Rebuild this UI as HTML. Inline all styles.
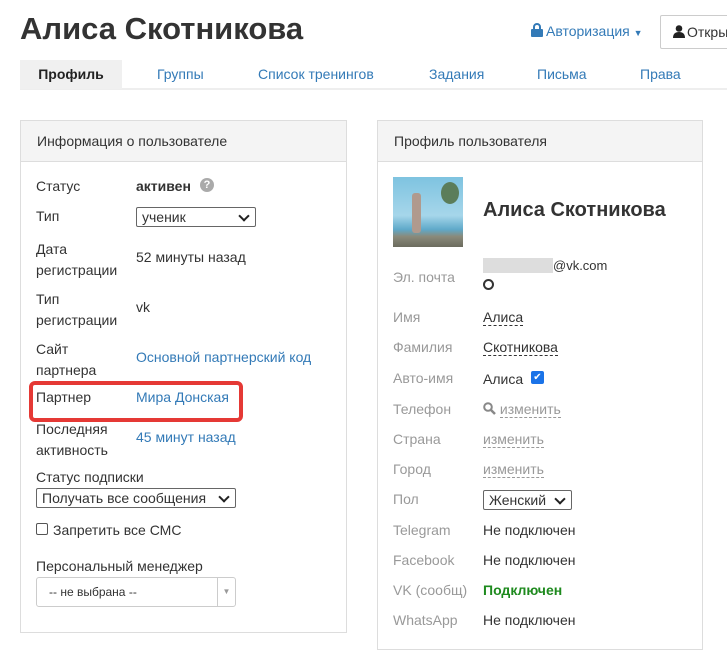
<!DOCTYPE html>
<html><head><meta charset="utf-8"><style>
*{box-sizing:border-box}
body{margin:0;width:727px;height:638px;overflow:hidden;background:#fff;font-family:"Liberation Sans",Arial,sans-serif;font-size:14px;color:#333;position:relative}
.a{position:absolute;white-space:nowrap}
h1{position:absolute;left:20px;top:11px;margin:0;font-size:31px;font-weight:bold;color:#333;letter-spacing:0px}
.tabs{position:absolute;left:20px;top:60px;width:707px;height:30px;border-bottom:2px solid #eee}
.tab{position:absolute;top:0;height:29px;line-height:29px;color:#337ab7;font-size:14px}
.panel{position:absolute;border:1px solid #ddd;background:#fff}
.ph{height:41px;background:#f4f4f4;border-bottom:1px solid #ddd;padding:12px 16px;font-size:14px;color:#333}
.l{color:#333}
.g{color:#999}
.lk{color:#337ab7}
.sel{position:absolute;border:1px solid #666;border-radius:2px;height:20px;font-size:14px;line-height:18px;padding-left:5px;background:#fff}
.sel:after{content:"";position:absolute;right:7px;top:4px;width:6px;height:6px;border-right:2px solid #222;border-bottom:2px solid #222;transform:rotate(45deg)}
.dash{border-bottom:1px dashed #333}
.dashg{border-bottom:1px dashed #999;color:#999}
</style></head><body>
<h1>Алиса Скотникова</h1>
<div class="a" style="left:531px;top:23px;color:#337ab7;font-size:14px"><svg width="12" height="14" viewBox="0 0 12 14" style="vertical-align:-1px;margin-right:3px"><path d="M3 6V4a3 3 0 0 1 6 0v2" fill="none" stroke="#337ab7" stroke-width="2"/><rect x="0" y="6" width="12" height="8" rx="1" fill="#337ab7"/></svg>Авторизация <span style="font-size:9px">▼</span></div>
<div class="a" style="left:660px;top:15px;width:80px;height:34px;border:1px solid #ccc;border-radius:2px;padding:8px 0 0 12px;font-size:14px"><svg width="12" height="13" viewBox="0 0 12 13" style="vertical-align:-1px;margin-right:2px"><circle cx="6" cy="3.5" r="3.3" fill="#222"/><path d="M0 13c0-4 2-6 6-6s6 2 6 6z" fill="#222"/></svg>Откры</div>
<div class="tabs">
<div class="tab" style="left:0;width:102px;background:#f0f0f0;color:#222;font-weight:bold;text-align:center">Профиль</div>
<div class="tab" style="left:137px">Группы</div>
<div class="tab" style="left:238px">Список тренингов</div>
<div class="tab" style="left:409px">Задания</div>
<div class="tab" style="left:517px">Письма</div>
<div class="tab" style="left:620px">Права</div>
</div>

<div class="panel" style="left:20px;top:120px;width:327px;height:513px">
<div class="ph">Информация о пользователе</div>
</div>
<div class="a l" style="left:36px;top:178px">Статус</div>
<div class="a" style="left:136px;top:178px;font-weight:bold">активен</div>
<div class="a" style="left:200px;top:178px;width:14px;height:14px;border-radius:50%;background:#aaa;color:#fff;font-size:11px;font-weight:bold;text-align:center;line-height:14px">?</div>
<div class="a l" style="left:36px;top:208px">Тип</div>
<div class="sel" style="left:136px;top:207px;width:120px">ученик</div>
<div class="a l" style="left:36px;top:239px;line-height:21px">Дата<br>регистрации</div>
<div class="a l" style="left:136px;top:249px">52 минуты назад</div>
<div class="a l" style="left:36px;top:289px;line-height:21px">Тип<br>регистрации</div>
<div class="a l" style="left:136px;top:299px">vk</div>
<div class="a l" style="left:36px;top:339px;line-height:21px">Сайт<br>партнера</div>
<div class="a lk" style="left:136px;top:349px">Основной партнерский код</div>
<div class="a" style="left:29px;top:381px;width:214px;height:41px;border:4px solid #e53935;border-radius:6px"></div>
<div class="a l" style="left:36px;top:389px">Партнер</div>
<div class="a lk" style="left:136px;top:389px">Мира Донская</div>
<div class="a l" style="left:36px;top:419px;line-height:21px">Последняя<br>активность</div>
<div class="a lk" style="left:136px;top:429px">45 минут назад</div>
<div class="a l" style="left:36px;top:469px">Статус подписки</div>
<div class="sel" style="left:36px;top:488px;width:200px">Получать все сообщения</div>
<div class="a" style="left:36px;top:523px;width:12px;height:12px;border:1px solid #555;border-radius:2px"></div>
<div class="a l" style="left:53px;top:522px">Запретить все СМС</div>
<div class="a l" style="left:36px;top:558px">Персональный менеджер</div>
<div class="a" style="left:36px;top:577px;width:200px;height:30px;border:1px solid #ccc;border-radius:3px;font-size:12px;padding:7px 0 0 12px">-- не выбрана --<div style="position:absolute;right:0;top:0;width:18px;height:28px;border-left:1px solid #ccc;color:#999;font-size:8px;text-align:center;line-height:28px">▼</div></div>

<div class="panel" style="left:377px;top:120px;width:326px;height:530px">
<div class="ph">Профиль пользователя</div>
</div>
<div class="a" style="left:393px;top:177px;width:70px;height:70px;background:linear-gradient(180deg,#7ec3e0 0%,#a6d6ea 55%,#5fa9c9 75%,#8a8a7a 85%,#6b6b5e 100%)"><div style="position:absolute;left:19px;top:16px;width:9px;height:40px;background:#b09a8e;border-radius:3px"></div><div style="position:absolute;left:48px;top:5px;width:18px;height:22px;background:#5b7d5a;border-radius:50%"></div></div>
<div class="a" style="left:483px;top:199px;font-size:20px;font-weight:bold;color:#333">Алиса Скотникова</div>
<div class="a g" style="left:393px;top:269px">Эл. почта</div>
<div class="a" style="left:483px;top:258px;width:70px;height:15px;background:#ddd"></div>
<div class="a" style="left:553px;top:258px;font-size:13px">@vk.com</div>
<div class="a" style="left:483px;top:279px;width:11px;height:11px;border:2px solid #333;border-radius:50%"></div>
<div class="a g" style="left:393px;top:309px">Имя</div>
<div class="a" style="left:483px;top:309px"><span class="dash">Алиса</span></div>
<div class="a g" style="left:393px;top:339px">Фамилия</div>
<div class="a" style="left:483px;top:339px"><span class="dash">Скотникова</span></div>
<div class="a g" style="left:393px;top:370px">Авто-имя</div>
<div class="a" style="left:483px;top:371px">Алиса</div>
<div class="a" style="left:531px;top:371px;width:13px;height:13px;background:#1a73e8;border-radius:2px;color:#fff;font-size:10px;text-align:center;line-height:13px">✔</div>
<div class="a g" style="left:393px;top:401px">Телефон</div>
<div class="a" style="left:483px;top:401px;color:#999"><svg width="13" height="13" viewBox="0 0 13 13" style="vertical-align:-1px"><circle cx="5" cy="5" r="3.8" fill="none" stroke="#888" stroke-width="2"/><path d="M8 8l4 4" stroke="#888" stroke-width="2.5"/></svg> <span class="dashg">изменить</span></div>
<div class="a g" style="left:393px;top:431px">Страна</div>
<div class="a" style="left:483px;top:431px"><span class="dashg">изменить</span></div>
<div class="a g" style="left:393px;top:461px">Город</div>
<div class="a" style="left:483px;top:461px"><span class="dashg">изменить</span></div>
<div class="a g" style="left:393px;top:491px">Пол</div>
<div class="sel" style="left:483px;top:490px;width:89px">Женский</div>
<div class="a g" style="left:393px;top:522px">Telegram</div>
<div class="a" style="left:483px;top:522px">Не подключен</div>
<div class="a g" style="left:393px;top:552px">Facebook</div>
<div class="a" style="left:483px;top:552px">Не подключен</div>
<div class="a g" style="left:393px;top:582px">VK (сообщ)</div>
<div class="a" style="left:483px;top:582px;color:#1e8a1e;font-weight:bold">Подключен</div>
<div class="a g" style="left:393px;top:612px">WhatsApp</div>
<div class="a" style="left:483px;top:612px">Не подключен</div>
</body></html>
